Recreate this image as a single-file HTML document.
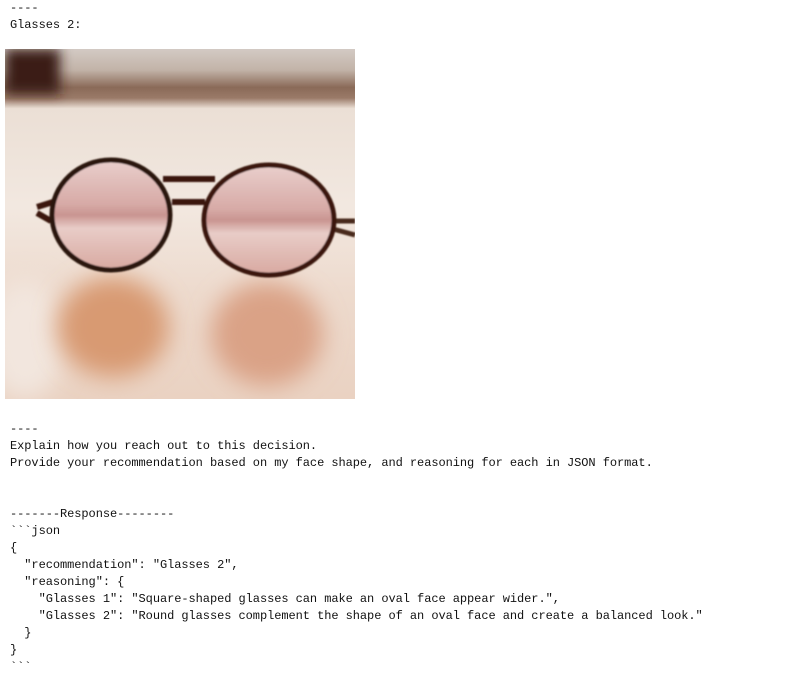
<!DOCTYPE html>
<html><head><meta charset="utf-8"><style>
body{margin:0;background:#fff;}
pre{margin:0;padding:0 0 0 10px;font-family:"Liberation Mono",monospace;font-size:12px;letter-spacing:-0.06px;line-height:17px;color:#111;white-space:pre;}
.img{position:absolute;left:5px;top:49px;width:350px;height:350px;}
</style></head><body>
<pre style="position:absolute;top:0;left:0">----
Glasses 2:</pre>
<svg class="img" width="350" height="350" viewBox="0 0 350 350">
<defs>
<linearGradient id="bg" x1="0" y1="0" x2="0" y2="1">
<stop offset="0" stop-color="#d3cac4"/><stop offset="0.06" stop-color="#c2b3a8"/><stop offset="0.11" stop-color="#8a6a58"/><stop offset="0.14" stop-color="#9a7a68"/><stop offset="0.17" stop-color="#ebdfd5"/><stop offset="0.45" stop-color="#f2e8e0"/><stop offset="0.7" stop-color="#eddacd"/><stop offset="1" stop-color="#ead2c2"/>
</linearGradient>
<linearGradient id="lens" x1="0" y1="0" x2="0" y2="1">
<stop offset="0" stop-color="#e9cfcc"/><stop offset="0.4" stop-color="#d7aaa6"/><stop offset="0.5" stop-color="#c99490"/><stop offset="0.62" stop-color="#e8ccc7"/><stop offset="1" stop-color="#d8a8a0"/>
</linearGradient>
<filter id="b" x="-50%" y="-50%" width="200%" height="200%"><feGaussianBlur stdDeviation="12"/></filter>
<filter id="b3" x="-50%" y="-50%" width="200%" height="200%"><feGaussianBlur stdDeviation="6"/></filter>
<filter id="b2"><feGaussianBlur stdDeviation="0.8"/></filter>
</defs>
<rect width="350" height="350" fill="url(#bg)"/>
<rect x="0" y="0" width="55" height="45" fill="#3a1a12" filter="url(#b3)"/>
<ellipse cx="20" cy="290" rx="40" ry="60" fill="#f2e6de" filter="url(#b)"/>
<ellipse cx="108" cy="278" rx="56" ry="50" fill="#d89a72" filter="url(#b)"/>
<ellipse cx="262" cy="285" rx="56" ry="52" fill="#daa286" filter="url(#b)"/>
<g filter="url(#b2)">
<path d="M32 158 L48 153 M32 164 L46 172" stroke="#3a1410" stroke-width="6" fill="none"/>
<path d="M328 172 L350 172 M328 180 L350 186" stroke="#4a2a1c" stroke-width="5" fill="none"/>
<ellipse cx="106" cy="166" rx="59" ry="55" fill="url(#lens)" stroke="#2c1210" stroke-width="5"/>
<ellipse cx="264" cy="171" rx="65" ry="55" fill="url(#lens)" stroke="#3a1510" stroke-width="5"/>
<path d="M158 130 L210 130 M167 153 L200 153" stroke="#3a1410" stroke-width="6" fill="none"/>
</g>
</svg>
<pre style="position:absolute;top:421px;left:0">----
Explain how you reach out to this decision.
Provide your recommendation based on my face shape, and reasoning for each in JSON format.


-------Response--------
&#96;&#96;&#96;json
{
  "recommendation": "Glasses 2",
  "reasoning": {
    "Glasses 1": "Square-shaped glasses can make an oval face appear wider.",
    "Glasses 2": "Round glasses complement the shape of an oval face and create a balanced look."
  }
}
&#96;&#96;&#96;</pre>
</body></html>
